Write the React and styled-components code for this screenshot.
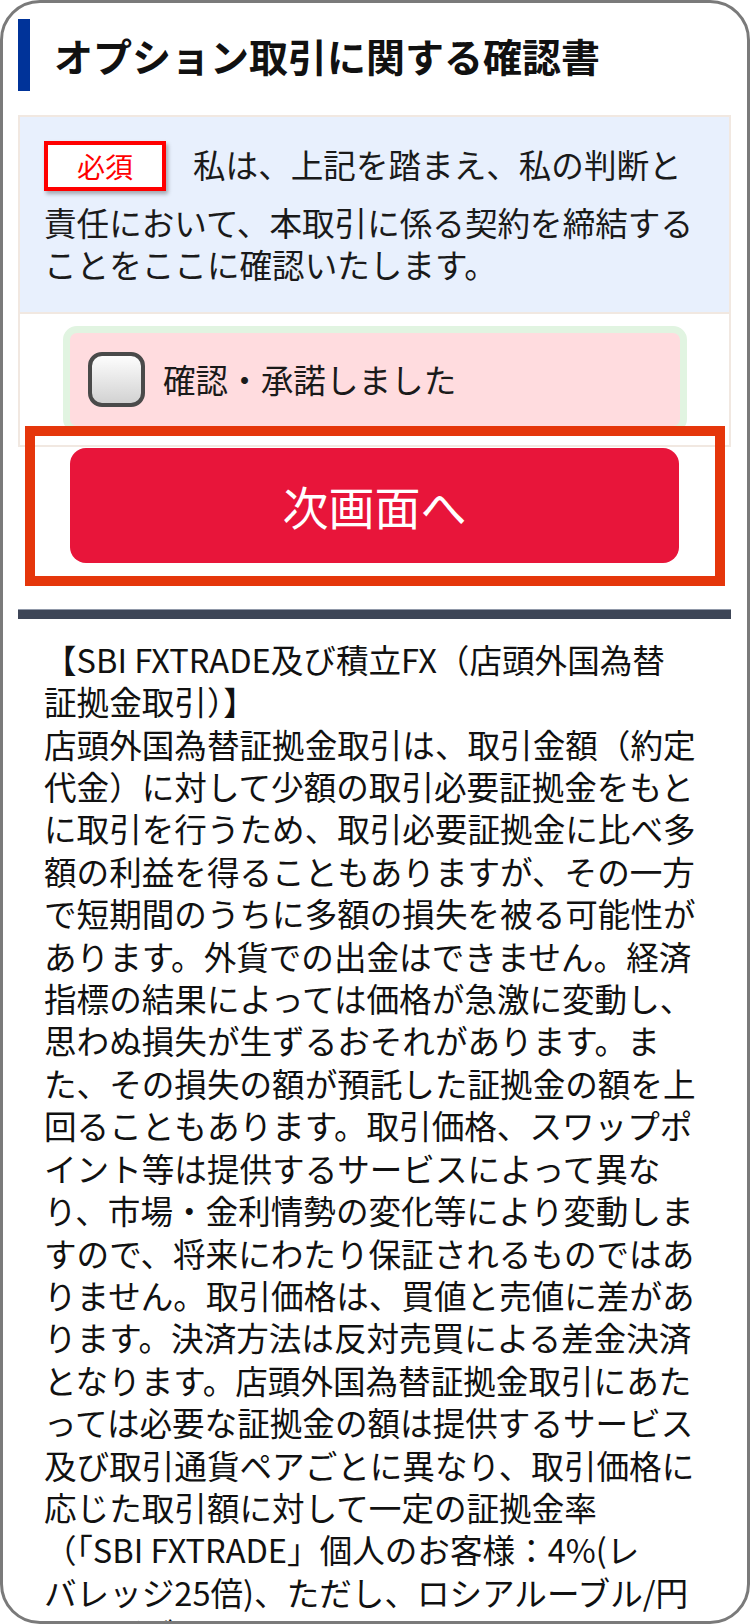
import React from 'react';
import styled, { createGlobalStyle } from 'styled-components';

const GlobalStyle = createGlobalStyle`
  html, body {
    margin: 0;
    padding: 0;
    background: #fff;
  }
  body {
    font-family: "Noto Sans CJK JP", sans-serif;
  }
`;

const Frame = styled.div`
  box-sizing: border-box;
  width: 750px;
  height: 1624px;
  border: 3px solid #7a7a7a;
  border-radius: 40px;
  overflow: hidden;
  padding: 16px 16px 0 15px;
  background: #fff;
`;

const Title = styled.h1`
  margin: 0;
  height: 72px;
  line-height: 72px;
  border-left: 12px solid #003399;
  padding-left: 24px;
  font-size: 39px;
  font-weight: 700;
  color: #111;
`;

const ConfirmBox = styled.section`
  margin-top: 24px;
  border: 2px solid #f1e8e1;
`;

const Statement = styled.p`
  margin: 0;
  padding: 24px 24px 26px;
  background: #e8f0fd;
  font-size: 32.6px;
  line-height: 42.4px;
  color: #1a1a1a;
`;

const Badge = styled.span`
  display: inline-block;
  box-sizing: border-box;
  width: 122px;
  height: 50px;
  margin: 0 27px 10px 0;
  border: 4px solid #ff0000;
  background: #fff;
  color: #ff0000;
  font-size: 28px;
  line-height: 42px;
  text-align: center;
  box-shadow: 2px 3px 4px rgba(0, 0, 0, 0.3);
`;

const AgreeRow = styled.div`
  border-top: 2px solid #f1e8e1;
  background: #fff;
  padding: 12px 42px 12px 43px;
`;

const AgreeBox = styled.label`
  display: flex;
  align-items: center;
  gap: 18px;
  padding: 19px 18px;
  border: 7px solid #e1f4e1;
  border-radius: 14px;
  background: #ffdcdf;
  font-size: 32.6px;
  line-height: 42.4px;
  color: #1a1a1a;
`;

const Checkbox = styled.input.attrs({ type: 'checkbox' })`
  appearance: none;
  flex: none;
  box-sizing: border-box;
  width: 57px;
  height: 55px;
  margin: 0;
  border: 4px solid #4a4a4a;
  border-radius: 14px;
  background: linear-gradient(#fdfdfd, #d2d2d2);
`;

const ButtonArea = styled.div`
  position: relative;
  margin-top: 1px;
  padding: 0 52px;
`;

const NextButton = styled.button`
  display: block;
  width: 100%;
  height: 115px;
  border: none;
  border-radius: 16px;
  background: #e8153a;
  color: #fff;
  font-family: "Noto Sans CJK JP", sans-serif;
  font-size: 46px;
`;

// focus frame drawn around the button area
const Highlight = styled.span`
  position: absolute;
  top: -22px;
  bottom: -23px;
  left: 7px;
  right: 6px;
  border: 10px solid #e5360b;
  pointer-events: none;
`;

const Divider = styled.hr`
  margin: 46px 0 0;
  height: 9px;
  border: none;
  border-top: 1px solid #9098a8;
  background: #3e4657;
`;

const Terms = styled.div`
  margin-top: 19px;
  padding-left: 26px;
  font-family: "Liberation Sans Narrow", "Noto Sans CJK JP", sans-serif;
  font-size: 32.6px;
  line-height: 42.4px;
  color: #111;
`;

const TermsLine = styled.div`
  white-space: nowrap;
`;

const termsLines = [
  '【SBI FXTRADE及び積立FX（店頭外国為替',
  '証拠金取引）】',
  '店頭外国為替証拠金取引は、取引金額（約定',
  '代金）に対して少額の取引必要証拠金をもと',
  'に取引を行うため、取引必要証拠金に比べ多',
  '額の利益を得ることもありますが、その一方',
  'で短期間のうちに多額の損失を被る可能性が',
  'あります。外貨での出金はできません。経済',
  '指標の結果によっては価格が急激に変動し、',
  '思わぬ損失が生ずるおそれがあります。ま',
  'た、その損失の額が預託した証拠金の額を上',
  '回ることもあります。取引価格、スワップポ',
  'イント等は提供するサービスによって異な',
  'り、市場・金利情勢の変化等により変動しま',
  'すので、将来にわたり保証されるものではあ',
  'りません。取引価格は、買値と売値に差があ',
  'ります。決済方法は反対売買による差金決済',
  'となります。店頭外国為替証拠金取引にあた',
  'っては必要な証拠金の額は提供するサービス',
  '及び取引通貨ペアごとに異なり、取引価格に',
  '応じた取引額に対して一定の証拠金率',
  '（「SBI FXTRADE」個人のお客様：4%(レ',
  'バレッジ25倍)、ただし、ロシアルーブル/円',
  'およびブラジルレアル/円は10%(レバレッ',
];

export default function App() {
  return (
    <>
      <GlobalStyle />
      <Frame>
        <Title>オプション取引に関する確認書</Title>

        <ConfirmBox>
          <Statement>
            <Badge>必須</Badge>
            私は、上記を踏まえ、私の判断と
            <br />
            責任において、本取引に係る契約を締結する
            <br />
            ことをここに確認いたします。
          </Statement>
          <AgreeRow>
            <AgreeBox>
              <Checkbox />
              確認・承諾しました
            </AgreeBox>
          </AgreeRow>
        </ConfirmBox>

        <ButtonArea>
          <NextButton type="button">次画面へ</NextButton>
          <Highlight />
        </ButtonArea>

        <Divider />

        <Terms>
          {termsLines.map((line, i) => (
            <TermsLine key={i}>{line}</TermsLine>
          ))}
        </Terms>
      </Frame>
    </>
  );
}
